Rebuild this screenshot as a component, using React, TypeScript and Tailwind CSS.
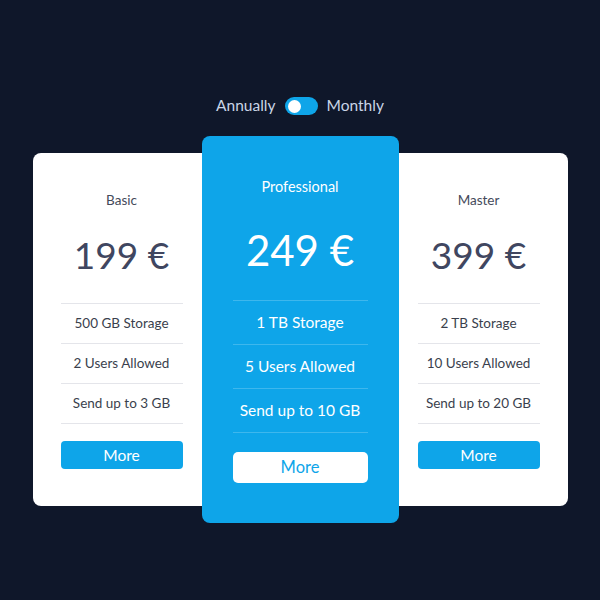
import React from "react";

type Plan = { name: string; price: string; features: string[] };

const basic: Plan = { name: "Basic", price: "199 €", features: ["500 GB Storage", "2 Users Allowed", "Send up to 3 GB"] };
const pro: Plan = { name: "Professional", price: "249 €", features: ["1 TB Storage", "5 Users Allowed", "Send up to 10 GB"] };
const master: Plan = { name: "Master", price: "399 €", features: ["2 TB Storage", "10 Users Allowed", "Send up to 20 GB"] };

function SideCard({ plan, side }: { plan: Plan; side: "left" | "right" }) {
  return (
    <div
      className={
        "w-[178px] bg-white flex flex-col items-center px-[28px] pt-[38px] pb-[37px] " +
        (side === "left" ? "rounded-l-[8px]" : "rounded-r-[8px]")
      }
    >
      <div className="text-[13.5px] leading-[18px] text-[#444a5a]">{plan.name}</div>
      <div className="mt-[26px] text-[37px] leading-[40px] text-[#404660]">{plan.price}</div>
      <div className="mt-[28px] w-full">
        {plan.features.map((f) => (
          <div key={f} className="border-t border-[#e4e5ea] h-[40px] flex items-center justify-center text-[13.5px] text-[#3a3f4d]">
            {f}
          </div>
        ))}
        <div className="border-t border-[#e4e5ea]" />
      </div>
      <button className="mt-[17px] w-full h-[28px] rounded-[4px] bg-[#0ea5e9] text-white text-[15.5px] leading-[28px]">
        More
      </button>
    </div>
  );
}

function ProCard({ plan }: { plan: Plan }) {
  return (
    <div className="relative z-10 -mx-[9px] w-[197px] bg-[#0ea5e9] rounded-[8px] flex flex-col items-center px-[31px] pt-[41px] pb-[40px]">
      <div className="text-[14.5px] leading-[20px] text-white">{plan.name}</div>
      <div className="mt-[31px] text-[42px] leading-[44px] text-white">{plan.price}</div>
      <div className="mt-[28px] w-full">
        {plan.features.map((f) => (
          <div key={f} className="border-t border-white/20 h-[44px] flex items-center justify-center text-[15.5px] text-white">
            {f}
          </div>
        ))}
        <div className="border-t border-white/20" />
      </div>
      <button className="mt-[19px] w-full h-[31px] rounded-[5px] bg-white text-[#0ea5e9] text-[16.5px] leading-[31px]">
        More
      </button>
    </div>
  );
}

export default function App() {
  return (
    <div
      className="w-[600px] h-[600px] bg-[#0f172a] flex flex-col items-center pt-[95px]"
      style={{ fontFamily: "Lato, 'Open Sans', sans-serif" }}
    >
      <div className="flex items-center gap-[9px] h-[22px] mb-[19px] text-[15.5px] text-[#c9d5e6]">
        <span>Annually</span>
        <div className="w-[33px] h-[18px] rounded-full bg-[#0ea5e9] flex items-center px-[3px]">
          <div className="w-[13px] h-[13px] rounded-full bg-white" />
        </div>
        <span>Monthly</span>
      </div>
      <div className="flex items-center">
        <SideCard plan={basic} side="left" />
        <ProCard plan={pro} />
        <SideCard plan={master} side="right" />
      </div>
    </div>
  );
}
